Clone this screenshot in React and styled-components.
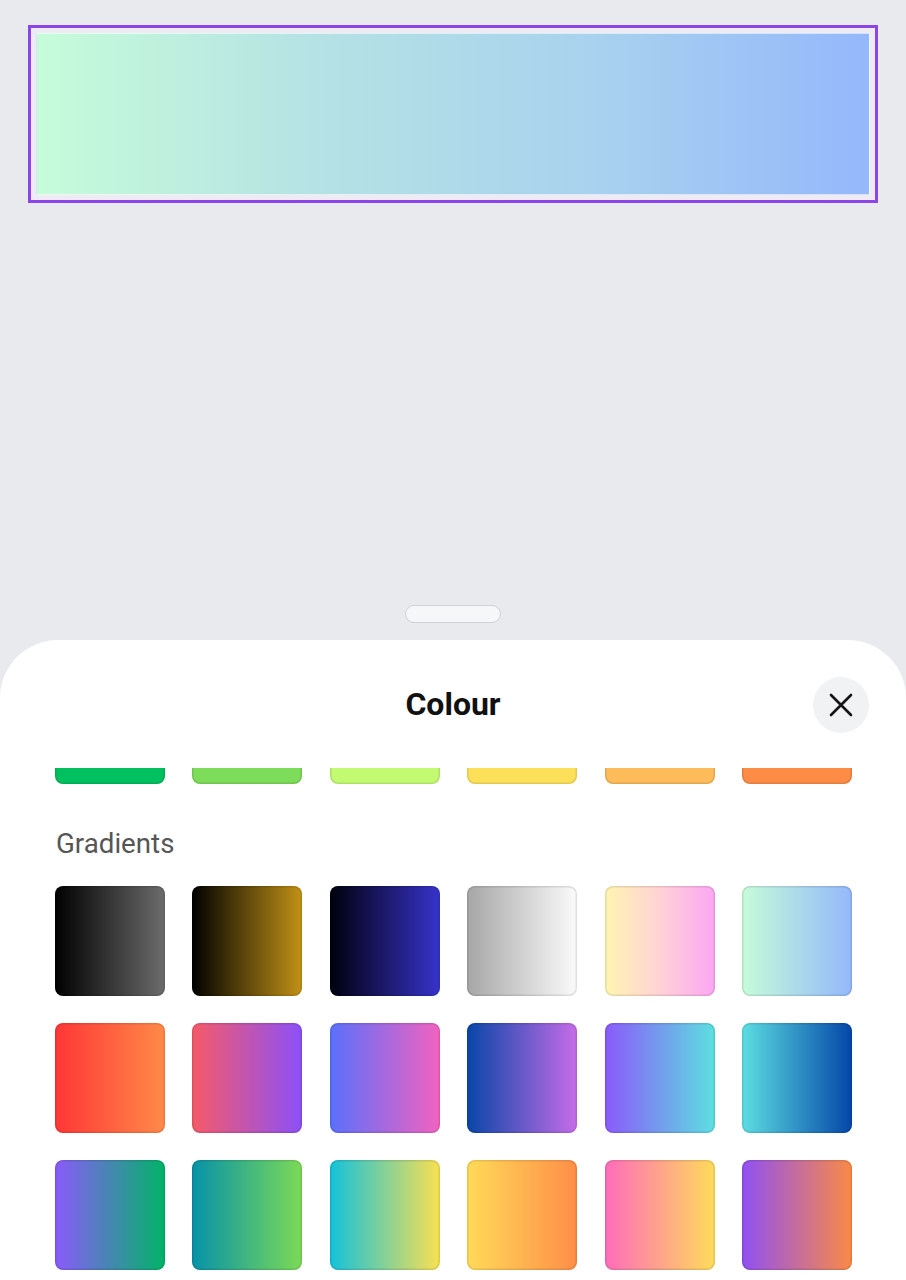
import React, { useLayoutEffect, useRef } from 'react';
import styled, { createGlobalStyle } from 'styled-components';

const GlobalStyle = createGlobalStyle`
  html, body {
    margin: 0;
    padding: 0;
    overflow: hidden;
    background: #e9eaee;
    font-family: Roboto, "Noto Sans", "Liberation Sans", sans-serif;
  }
  * { box-sizing: border-box; }
`;

const solids = ['#00c060', '#7ddc5a', '#c2fa72', '#fde05a', '#fdbb5a', '#fd8c46'];

const gradients = [
  ['#000000', '#6c6c6c'],
  ['#000000', '#c29216'],
  ['#00000c', '#3733cb'],
  ['#a6a6a6', '#fbfbfb'],
  ['#fff5b0', '#ffd2d6', '#fca6f4'],
  ['#c6fcd9', '#94b8fb'],
  ['#ff3636', '#ff8a48'],
  ['#f65a68', '#8c50f8'],
  ['#5a70fc', '#f262c0'],
  ['#0846a8', '#c66ce8'],
  ['#8a5afb', '#5ce0e0'],
  ['#5cdee2', '#0446a8'],
  ['#8a5afb', '#00b466'],
  ['#0692a8', '#7cda56'],
  ['#14c2da', '#fae052'],
  ['#ffda58', '#ff8e48'],
  ['#ff6cba', '#fedc5a'],
  ['#9050f2', '#fa8a46'],
];

const Page = styled.div`
  height: 100vh;
  display: flex;
  flex-direction: column;
`;

const Canvas = styled.div`
  flex: 1;
  display: flex;
  flex-direction: column;
  align-items: center;
  padding: 25px 28px 0;
`;

const SelectedShape = styled.div`
  width: 100%;
  height: 178px;
  border: 3px solid #8b45e8;
  padding: 5px 5px;
  background: #eeebf5;
`;

const ShapeFill = styled.div`
  height: 100%;
  background: linear-gradient(90deg, ${(p) => p.$stops.join(', ')});
  border: 1px solid rgba(255, 255, 255, 0.6);
`;

const Handle = styled.div`
  margin-top: auto;
  margin-bottom: 17px;
  width: 96px;
  height: 18px;
  border-radius: 9px;
  background: #f6f7f9;
  border: 1.5px solid #cfd1d6;
`;

const Sheet = styled.div`
  height: 640px;
  background: #ffffff;
  border-radius: 58px 58px 0 0;
  display: flex;
  flex-direction: column;
`;

const SheetHeader = styled.div`
  height: 128px;
  flex-shrink: 0;
  display: flex;
  align-items: center;
  justify-content: center;
  position: relative;
`;

const Title = styled.h2`
  margin: 0;
  font-size: 32px;
  font-weight: 700;
  color: #111111;
  letter-spacing: 0;
`;

const CloseButton = styled.button`
  position: absolute;
  right: 37px;
  top: 37px;
  width: 56px;
  height: 56px;
  border-radius: 50%;
  border: none;
  background: #f1f2f4;
  display: flex;
  align-items: center;
  justify-content: center;
  padding: 0;
  color: #151515;
`;

const Scroller = styled.div`
  flex: 1;
  min-height: 0;
  overflow-y: auto;
  padding: 0 55px 60px;
  scrollbar-width: none;
  &::-webkit-scrollbar { display: none; }
`;

const SectionLabel = styled.div`
  margin: 44px 0 26px 1px;
  font-size: 27.7px;
  line-height: 32px;
  color: #565656;
`;

const SwatchGrid = styled.div`
  display: grid;
  grid-template-columns: repeat(6, 110px);
  column-gap: 27.4px;
  row-gap: 27px;
`;

const Swatch = styled.div`
  height: 110px;
  border-radius: 8px;
  background: ${(p) =>
    p.$stops.length > 1 ? `linear-gradient(90deg, ${p.$stops.join(', ')})` : p.$stops[0]};
  box-shadow: inset 0 0 0 1.5px rgba(0, 0, 0, 0.1);
`;

const CloseIcon = () => (
  <svg width="24" height="24" viewBox="0 0 24 24" fill="none">
    <path d="M2 2 L22 22 M22 2 L2 22" stroke="currentColor" strokeWidth="2.6" strokeLinecap="round" />
  </svg>
);

export default function App() {
  const scrollRef = useRef(null);

  useLayoutEffect(() => {
    if (scrollRef.current) scrollRef.current.scrollTop = 94;
  }, []);

  return (
    <Page>
      <GlobalStyle />
      <Canvas>
        <SelectedShape>
          <ShapeFill $stops={['#c6fcd9', '#b5e2e4', '#a8d2ee', '#94b8fb']} />
        </SelectedShape>
        <Handle />
      </Canvas>
      <Sheet>
        <SheetHeader>
          <Title>Colour</Title>
          <CloseButton aria-label="Close">
            <CloseIcon />
          </CloseButton>
        </SheetHeader>
        <Scroller ref={scrollRef}>
          <SwatchGrid>
            {solids.map((c) => (
              <Swatch key={c} $stops={[c]} />
            ))}
          </SwatchGrid>
          <SectionLabel>Gradients</SectionLabel>
          <SwatchGrid>
            {gradients.map((g, i) => (
              <Swatch key={i} $stops={g} />
            ))}
          </SwatchGrid>
        </Scroller>
      </Sheet>
    </Page>
  );
}
